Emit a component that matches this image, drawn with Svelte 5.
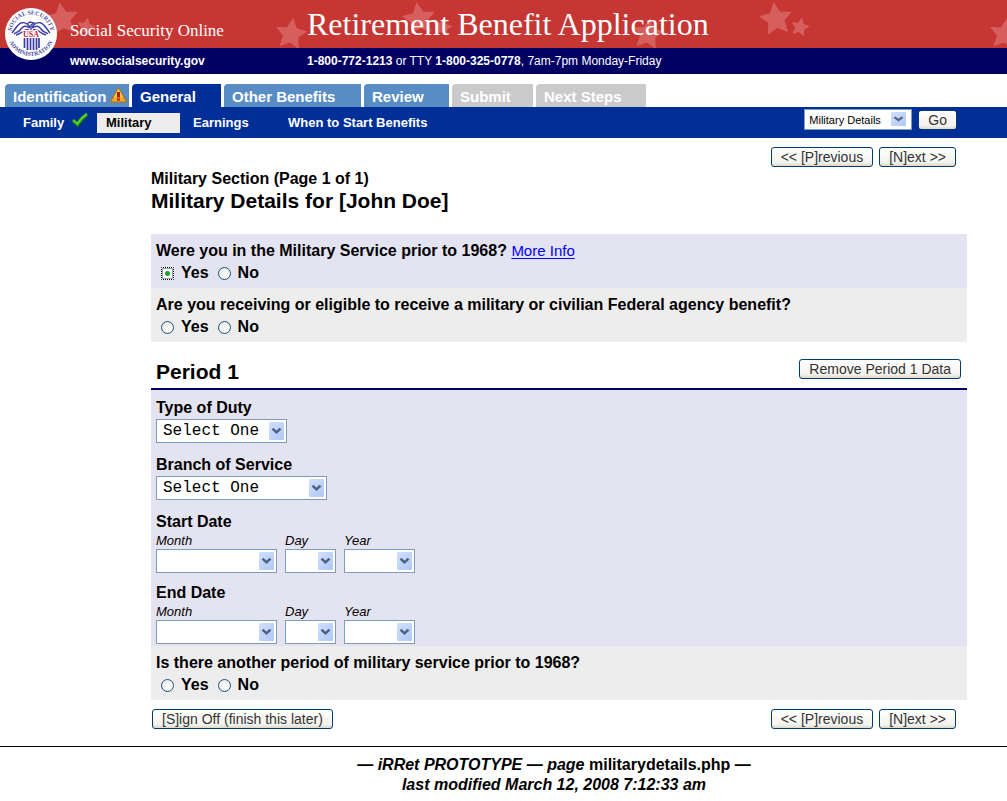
<script lang="ts">
	type Tab = { label: string; state: 'open' | 'current' | 'disabled'; width: string; warn?: boolean };

	const tabs: Tab[] = [
		{ label: 'Identification', state: 'open', width: '124px', warn: true },
		{ label: 'General', state: 'current', width: '89px' },
		{ label: 'Other Benefits', state: 'open', width: '137px' },
		{ label: 'Review', state: 'open', width: '85px' },
		{ label: 'Submit', state: 'disabled', width: '81px' },
		{ label: 'Next Steps', state: 'disabled', width: '110px' }
	];

	const months = ['', 'January', 'February', 'March', 'April', 'May', 'June', 'July',
		'August', 'September', 'October', 'November', 'December'];
	const days = ['', ...Array.from({ length: 31 }, (_, i) => String(i + 1))];
	const years = ['', ...Array.from({ length: 48 }, (_, i) => String(1967 - i))];

	let prior = $state('yes');
	let federal = $state('');
	let another = $state('');
</script>

{#snippet arrow()}
	<svg class="arrow" viewBox="0 0 15 19" preserveAspectRatio="none" aria-hidden="true">
		<defs>
			<linearGradient id="arrow-face" x1="0" y1="0" x2="1" y2="1">
				<stop offset="0" stop-color="#d3dffd" />
				<stop offset="1" stop-color="#aec8f7" />
			</linearGradient>
		</defs>
		<rect width="15" height="19" rx="1" fill="url(#arrow-face)" />
		<path d="M3.500 7l4 4 4-4" fill="none" stroke="#4d6185" stroke-width="2.500" />
	</svg>
{/snippet}

{#snippet dropdown(id: string, kind: string, options: string[])}
	<span class="select {kind}">
		<select {id}>
			{#each options as o}<option>{o}</option>{/each}
		</select>
		{@render arrow()}
	</span>
{/snippet}

{#snippet dates(title: string, id: string)}
	<fieldset class="dates">
		<legend>{title}</legend>
		<div class="date-row">
			<div><label for="{id}-month">Month</label>{@render dropdown(`${id}-month`, 'month', months)}</div>
			<div><label for="{id}-day">Day</label>{@render dropdown(`${id}-day`, 'day', days)}</div>
			<div><label for="{id}-year">Year</label>{@render dropdown(`${id}-year`, 'year', years)}</div>
		</div>
	</fieldset>
{/snippet}

<header>
	<div class="banner">
		<svg class="stars" aria-hidden="true">
			<defs>
				<path id="star" d="M0-17 L5.2-6.5 16.5-5 8.2 2.7 10.3 14.5 0 9-10.3 14.5-8.2 2.7-16.5-5-5.2-6.5Z" />
				<pattern id="sky" width="357" height="48" patternUnits="userSpaceOnUse">
					<g fill="#d65f5d">
						<use href="#star" transform="translate(62 19) rotate(-8)" />
						<use href="#star" transform="translate(86 27) rotate(12) scale(.56)" />
						<use href="#star" transform="translate(291 34) rotate(8) scale(.95)" />
					</g>
				</pattern>
			</defs>
			<rect width="100%" height="48" fill="url(#sky)" />
		</svg>
		<span class="brand">Social Security Online</span>
		<span class="app-name">Retirement Benefit Application</span>
	</div>
	<div class="contact">
		<a href="#home"><b>www.socialsecurity.gov</b></a>
		<span><b>1-800-772-1213</b> or TTY <b>1-800-325-0778</b>, 7am-7pm Monday-Friday</span>
	</div>
	<svg class="seal" viewBox="0 0 52 52" role="img" aria-label="Social Security Administration seal">
		<circle cx="26" cy="26" r="26" fill="#fff" />
		<defs>
			<path id="ring-top" d="M6.500 29a19.700 19.700 0 1 1 39 0" />
			<path id="ring-bottom" d="M2 24a24 24 0 0 0 48 0" />
		</defs>
		<g class="ring">
			<text><textPath href="#ring-top" startOffset="50%" text-anchor="middle">SOCIAL SECURITY</textPath></text>
			<text><textPath href="#ring-bottom" startOffset="50%" text-anchor="middle">ADMINISTRATION</textPath></text>
		</g>
		<g fill="none" stroke="#3c3ca4" stroke-width="1.400">
			<path d="M25 19c-3-4-6-5-9-4s-5 5-9 10M25 20c-4-3-7-2-9 1s-4 3-7 5M24 22c-3-1-5 0-7 2s-3 2-6 3" />
			<path d="M27 19c3-4 6-5 9-4s5 5 9 10M27 20c4-3 7-2 9 1s4 3 7 5M28 22c3-1 5 0 7 2s3 2 6 3" />
			<path d="M22 16l3-2 4 1-3 2v5" />
			<path d="M19.500 30v10M22.500 30v12M25.500 30v12M28.500 30v12M31.500 30v12M34 30v10" stroke-width="1.700" />
		</g>
		<text class="usa" x="26" y="29" text-anchor="middle">USA</text>
	</svg>
</header>

<nav class="tabs" aria-label="Application sections">
	{#each tabs as tab}
		<a href="#{tab.label}" class={tab.state} style:width={tab.width}>
			{tab.label}
			{#if tab.warn}
				<svg width="17" height="16" viewBox="0 0 17 16" aria-hidden="true">
					<path d="M8.500 1L16 13.500V15H1V13.500Z" fill="#eda92c" stroke="#a87412" stroke-width="1.200" stroke-linejoin="round" />
					<path d="M8.500 1.500L13 10H4Z" fill="#f7cf4e" />
					<path d="M7 5h3v5.500H7Z" fill="#c8150c" />
					<rect x="7" y="11.500" width="3" height="2" fill="#c8150c" />
				</svg>
			{/if}
		</a>
	{/each}
</nav>

<div class="subnav">
	<nav aria-label="General pages">
		<a class="family" href="#family">
			Family
			<svg width="16" height="14" viewBox="0 0 16 14" aria-hidden="true">
				<path d="M1 7.500l4.500 4C8 7.500 10.500 4.500 15 1.500" fill="none" stroke="#14780e" stroke-width="4" />
				<path d="M1 7l4.500 3.800C8 6.800 10.500 3.800 15 1" fill="none" stroke="#56cf2a" stroke-width="2.200" />
			</svg>
		</a>
		<a class="here" href="#military">Military</a>
		<a class="earnings" href="#earnings">Earnings</a>
		<a href="#when">When to Start Benefits</a>
	</nav>
	<form class="jump" onsubmit={(e) => e.preventDefault()}>
		<span class="select small">
			<select aria-label="Go to page"><option>Military Details</option></select>
			{@render arrow()}
		</span>
		<button>Go</button>
	</form>
</div>

<main>
	<div class="pager">
		<button type="button" accesskey="p">&lt;&lt; [P]revious</button>
		<button type="button" accesskey="n">[N]ext &gt;&gt;</button>
	</div>

	<div class="heading">
		<p>Military Section (Page 1 of 1)</p>
		<h1>Military Details for [John Doe]</h1>
	</div>

	<fieldset class="question lilac">
		<legend>Were you in the Military Service prior to 1968? <a href="#more">More Info</a></legend>
		<div class="choices">
			<label><input class="focused" type="radio" name="prior" value="yes" bind:group={prior} />Yes</label>
			<label><input type="radio" name="prior" value="no" bind:group={prior} />No</label>
		</div>
	</fieldset>
	<fieldset class="question">
		<legend>Are you receiving or eligible to receive a military or civilian Federal agency benefit?</legend>
		<div class="choices">
			<label><input type="radio" name="federal" value="yes" bind:group={federal} />Yes</label>
			<label><input type="radio" name="federal" value="no" bind:group={federal} />No</label>
		</div>
	</fieldset>

	<div class="period-head">
		<h2>Period 1</h2>
		<button type="button">Remove Period 1 Data</button>
	</div>
	<div class="period">
		<div class="field">
			<label for="duty">Type of Duty</label>
			{@render dropdown('duty', 'duty', ['Select One'])}
		</div>
		<div class="field">
			<label for="branch">Branch of Service</label>
			{@render dropdown('branch', 'branch', ['Select One'])}
		</div>
		{@render dates('Start Date', 'start')}
		{@render dates('End Date', 'end')}
	</div>
	<fieldset class="question">
		<legend>Is there another period of military service prior to 1968?</legend>
		<div class="choices">
			<label><input type="radio" name="another" value="yes" bind:group={another} />Yes</label>
			<label><input type="radio" name="another" value="no" bind:group={another} />No</label>
		</div>
	</fieldset>

	<div class="pager bottom">
		<button class="sign-off" type="button" accesskey="s">[S]ign Off (finish this later)</button>
		<button type="button">&lt;&lt; [P]revious</button>
		<button type="button">[N]ext &gt;&gt;</button>
	</div>
</main>

<footer>
	<em>— iRRet PROTOTYPE — page</em> militarydetails.php —<br />
	<em>last modified March 12, 2008 7:12:33 am</em>
</footer>

<style>
	:global(body) {
		background: #fff; color: #000;
		font: 16px/20px "Liberation Sans", Arial, sans-serif;
	}
	a { text-decoration: none; color: inherit; }
	p, h1, h2 { margin: 0; }
	fieldset { margin: 0; padding: 0; border: 0; min-width: 0; }
	legend { padding: 0; }

	/* banner */
	header { position: relative; color: #fff; }
	.banner, .contact { display: grid; grid-template-columns: 237px 1fr; align-items: center; padding-left: 70px; }
	.banner { position: relative; height: 48px; background: #c63633; font-family: "Liberation Serif", "Times New Roman", serif; }
	.contact { height: 26px; background: #000063; font-size: 12px; }
	.stars { position: absolute; inset: 0; width: 100%; height: 48px; }
	.brand, .app-name { position: relative; white-space: nowrap; }
	.brand { font-size: 17px; padding-top: 14px; }
	.app-name { font-size: 32px; line-height: 48px; }
	.seal { position: absolute; left: 5px; top: 8px; width: 52px; height: 52px; }
	.ring { font: bold 6px "Liberation Serif", serif; fill: #4a4aa4; }
	.usa { font: bold 8px "Liberation Serif", serif; fill: #d4143c; stroke: #fff; stroke-width: 2px; paint-order: stroke; }

	/* tabs */
	.tabs { display: flex; gap: 3px; padding: 10px 0 0 5px; font-size: 15px; font-weight: bold; color: #fff; }
	.tabs a {
		box-sizing: border-box; height: 23px; padding: 3px 0 0 8px;
		display: flex; gap: 4px; white-space: nowrap;
		border-top-left-radius: 4px; background: #588cc4;
	}
	.tabs .current { background: #003097; }
	.tabs .disabled { background: #cacaca; }

	.subnav { display: flex; justify-content: space-between; background: #003097; color: #fff; height: 31px; padding: 0 50px 0 23px; }
	.subnav nav { display: flex; align-items: center; font-size: 13px; font-weight: bold; white-space: nowrap; }
	.family { display: flex; gap: 8px; width: 74px; }
	.here { box-sizing: border-box; width: 83px; padding-left: 9px; background: #ededed; color: #000; }
	.earnings { padding-left: 13px; width: 95px; }
	.jump { display: flex; gap: 6px; padding-top: 2px; }
	.jump button { margin-top: 1px; }

	button {
		height: 20px; padding: 0 9px; border: 1px solid #003c74; border-radius: 3px;
		background: linear-gradient(#fff, #f3f2ed 80%, #dcd8cc);
		color: #333; font: 14px/18px "Liberation Sans", Arial, sans-serif; white-space: nowrap;
	}

	/* selects */
	.select { position: relative; display: block; }
	select {
		display: block; box-sizing: border-box; width: 100%; height: 24px; margin: 0; padding: 0 0 0 6px;
		appearance: none; border: 1px solid #7f9db9; border-radius: 0; background: #fff; color: #000;
		font: 16px/20px "Liberation Mono", "Courier New", monospace;
	}
	.arrow { position: absolute; right: 3px; top: 3px; width: 15px; height: 18px; pointer-events: none; }
	.duty { width: 131px; }
	.branch { width: 171px; }
	.month { width: 121px; }
	.day { width: 51px; }
	.year { width: 71px; }
	.small { width: 108px; }
	.small select { height: 21px; padding-left: 4px; font: 11px/16px "Liberation Sans", Arial, sans-serif; }
	.small .arrow { right: 6px; height: 14px; }

	/* form */
	main { padding: 9px 40px 0 151px; }
	.pager { display: flex; justify-content: flex-end; gap: 6px; padding-right: 11px; }
	.pager.bottom { padding-top: 9px; }
	.sign-off { margin: 0 auto 0 1px; }
	.heading { padding: 2px 0 22px; font-weight: bold; }
	h1 { font-size: 21px; line-height: 23px; }
	h2 { font-size: 21px; line-height: 25px; }

	.question { padding: 7px 5px 5px; background: #ededed; font-weight: bold; }
	.question legend { float: left; width: 100%; }
	.question.lilac { background: #e4e3f1; }
	.question legend a { color: #00f; font-weight: normal; font-size: 15px; text-decoration: underline; text-underline-offset: 2px; }
	.choices { clear: both; display: flex; gap: 9px; padding: 2px 0 0 5px; }
	.choices label { display: flex; align-items: center; gap: 7px; }
	input[type='radio'] {
		appearance: none; box-sizing: border-box; width: 13px; height: 13px; margin: 0;
		border: 1px solid #1c5180; border-radius: 50%;
		background: radial-gradient(circle at 65% 65%, #fff, #e6e6e0);
	}
	input[type='radio']:checked { background: radial-gradient(circle, #21a121 0 2px, #fff 3px); }
	/* square focus box round the selected radio */
	input.focused:checked { border: 1px dotted #000; border-radius: 1px; box-shadow: inset 0 0 0 1px #8fa8c0; }

	.period-head {
		display: flex; justify-content: space-between; align-items: flex-start;
		padding: 17px 6px 4px 5px; border-bottom: 2px solid #000063;
	}
	.period { padding: 8px 5px 2px; background: #e4e3f1; }
	.field { margin-bottom: 12px; }
	.field label { display: block; margin-bottom: 1px; font-weight: bold; }
	.dates + :global(.dates) { margin-top: 10px; }
	.dates legend { font-weight: bold; }
	.date-row { display: flex; gap: 8px; }
	.date-row label { display: block; font-size: 13px; line-height: 17px; font-style: italic; }

	footer { margin-top: 17px; padding: 8px 0 6px 101px; border-top: 1px solid #000; text-align: center; font-weight: bold; }
</style>
